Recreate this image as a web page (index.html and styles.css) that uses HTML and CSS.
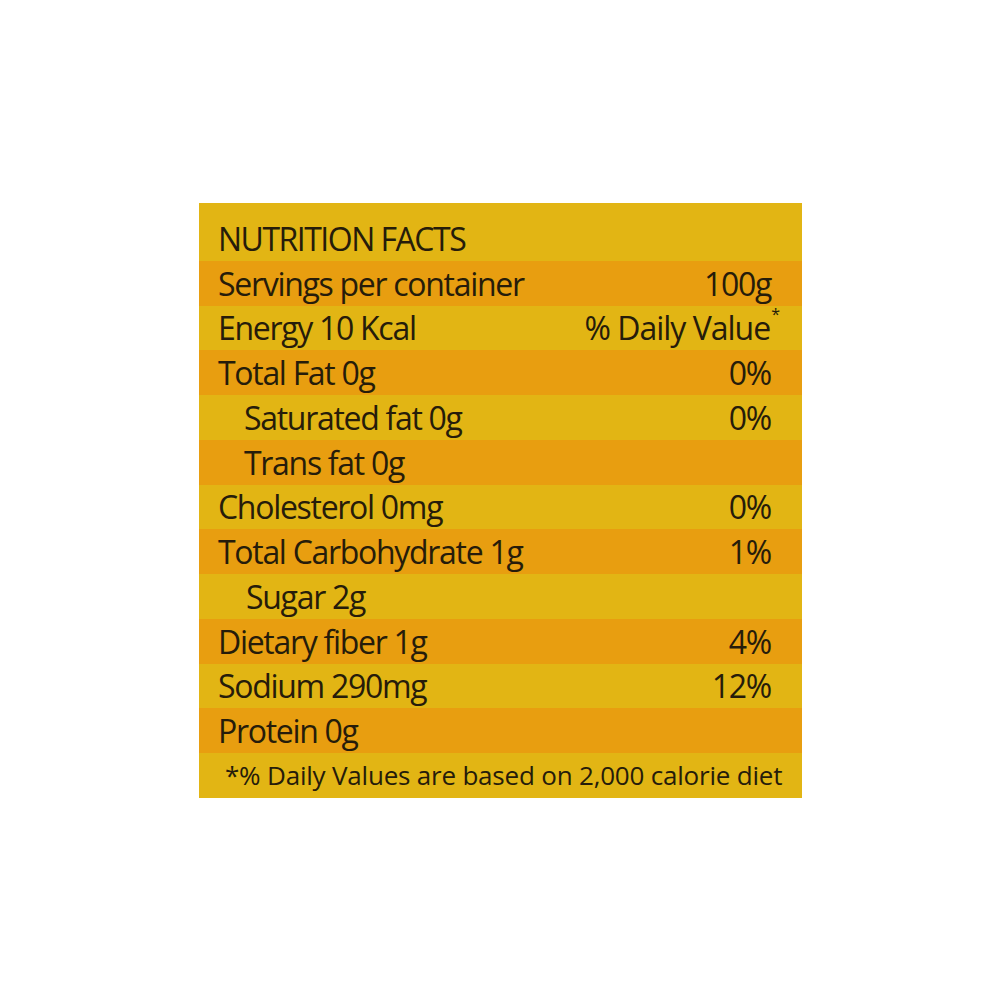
FILE: index.html
```html
<!DOCTYPE html>
<html>
<head>
<meta charset="utf-8">
<link rel="stylesheet" href="styles.css">
</head>
<body>
<div class="label">
  <div class="row head"><span>NUTRITION FACTS</span></div>
  <div class="row band"><span>Servings per container</span><span>100g</span></div>
  <div class="row"><span>Energy 10 Kcal</span><span class="dv">% Daily Value<sup>*</sup></span></div>
  <div class="row band"><span>Total Fat 0g</span><span>0%</span></div>
  <div class="row sub"><span>Saturated fat 0g</span><span>0%</span></div>
  <div class="row band sub"><span>Trans fat 0g</span></div>
  <div class="row"><span>Cholesterol 0mg</span><span>0%</span></div>
  <div class="row band"><span>Total Carbohydrate 1g</span><span>1%</span></div>
  <div class="row sub2"><span>Sugar 2g</span></div>
  <div class="row band"><span>Dietary fiber 1g</span><span>4%</span></div>
  <div class="row"><span>Sodium 290mg</span><span>12%</span></div>
  <div class="row band"><span>Protein 0g</span></div>
  <div class="row foot"><span>*% Daily Values are based on 2,000 calorie diet</span></div>
</div>
</body>
</html>
```
FILE: styles.css
```css
html, body {
  margin: 0;
  padding: 0;
  background: #ffffff;
}
body {
  padding-top: 203px;
}
.label {
  width: 603px;
  margin-left: 199px;
  padding-top: 13px;
  background: #e2b514;
  font-family: "Open Sans", "Noto Sans", sans-serif;
  color: #261c0a;
  font-size: 32px;
  letter-spacing: -1.3px;
}
.row {
  height: 44.75px;
  display: flex;
  justify-content: space-between;
  align-items: center;
  padding-left: 19px;
  padding-right: 31px;
  white-space: nowrap;
}
.band {
  background: #e89e10;
}
.head {
  letter-spacing: -1.5px;
}
.sub {
  padding-left: 45px;
}
.sub2 {
  padding-left: 47px;
}
.dv {
  letter-spacing: -1px;
}
.dv sup {
  font-size: 16px;
  vertical-align: top;
  line-height: 1;
  margin-left: 1px;
  margin-right: -8px;
}
.foot {
  font-size: 26px;
  letter-spacing: -0.2px;
  padding-left: 26px;
}
```
